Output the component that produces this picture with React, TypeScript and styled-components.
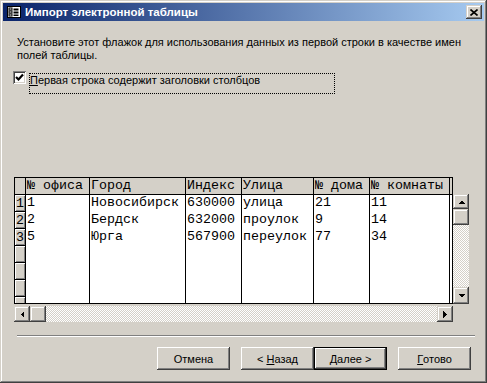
import React from "react";
import styled, { createGlobalStyle } from "styled-components";

const Global = createGlobalStyle`
  html, body { margin: 0; padding: 0; background: #d4d0c8; }
  * { box-sizing: border-box; }
`;

const FACE = "#d4d0c8";
const UI_FONT = `"Liberation Sans", Arial, sans-serif`;
const MONO = `"Liberation Mono", "Courier New", monospace`;

const bevelOut = `
  box-shadow: inset -1px -1px #404040, inset 1px 1px ${FACE},
    inset -2px -2px #808080, inset 2px 2px #ffffff;
`;

const Window = styled.div`
  width: 487px;
  height: 383px;
  padding: 3px;
  background: ${FACE};
  ${bevelOut}
  display: flex;
  flex-direction: column;
  font-family: ${UI_FONT};
  font-size: 11px;
  color: #000;
`;

const TitleBar = styled.div`
  height: 18px;
  display: flex;
  align-items: center;
  padding-left: 3px;
  padding-right: 2px;
  background: linear-gradient(to right, #0a246a, #a6caf0);
`;

const TitleIcon = styled.svg`
  width: 16px;
  height: 16px;
  flex: none;
`;

const TitleText = styled.span`
  margin-left: 3px;
  color: #fff;
  font-weight: bold;
  font-size: 11.5px;
  white-space: nowrap;
`;

const CloseBtn = styled.div`
  margin-left: auto;
  width: 16px;
  height: 14px;
  background: ${FACE};
  ${bevelOut}
  display: flex;
  align-items: center;
  justify-content: center;
`;

const Content = styled.div`
  flex: 1;
  display: flex;
  flex-direction: column;
  padding: 15px 13px 0 10px;
`;

const Instruction = styled.p`
  margin: 0 0 0 4px;
  line-height: 13px;
`;

const CheckRow = styled.div`
  margin-top: 9px;
  display: flex;
  align-items: flex-start;
  gap: 3px;
`;

const CheckBox = styled.div`
  width: 13px;
  height: 13px;
  flex: none;
  background: #fff;
  box-shadow: inset 1px 1px #808080, inset -1px -1px #ffffff,
    inset 2px 2px #404040, inset -2px -2px ${FACE};
  display: flex;
  align-items: center;
  justify-content: center;
`;

const CheckLabel = styled.div`
  margin-top: 2px;
  width: 306px;
  height: 21px;
  border: 1px dotted #000;
  line-height: 13px;
  padding-left: 0;
`;

const Underline = styled.span`
  text-decoration: underline;
  text-underline-offset: 1px;
`;

const GridArea = styled.div`
  margin-top: 83px;
  margin-left: 1px;
  display: grid;
  grid-template-columns: 439px 16px;
  grid-template-rows: 127px 16px;
  row-gap: 2px;
`;

const Sheet = styled.div`
  border: 1px solid #000;
  overflow: hidden;
  background: #fff;
  display: grid;
  grid-template-columns: 11px 64px 96px 56px 72px 56px 80px 2px;
  grid-auto-rows: 17px;
  align-content: start;
  font-family: ${MONO};
  font-size: 13.33px;
`;

const HeadCell = styled.div<{ $last?: boolean }>`
  background: ${FACE};
  border-bottom: 1px solid #000;
  border-right: ${(p) => (p.$last ? "none" : "1px solid #000")};
  line-height: 16px;
  padding-left: 1px;
  white-space: nowrap;
  overflow: hidden;
`;

const RowHead = styled.div`
  background: ${FACE};
  border-right: 1px solid #000;
  border-bottom: 1px solid #000;
  box-shadow: inset 1px 1px #fff, inset -1px -1px #808080;
  line-height: 17px;
  padding-left: 1px;
  overflow: hidden;
`;

const Cell = styled.div<{ $last?: boolean }>`
  background: #fff;
  border-right: ${(p) => (p.$last ? "none" : "1px solid #000")};
  line-height: 16px;
  padding-left: 1px;
  white-space: nowrap;
  overflow: hidden;
`;

const VScroll = styled.div`
  grid-column: 2;
  grid-row: 1;
  margin-top: 17px;
  height: 110px;
  display: flex;
  flex-direction: column;
  background-color: #fff;
  background-image: conic-gradient(${FACE} 25%, #fff 0 50%, ${FACE} 0 75%, #fff 0);
  background-size: 2px 2px;
`;

const HScroll = styled.div`
  grid-column: 1;
  grid-row: 2;
  display: flex;
  background-color: #fff;
  background-image: conic-gradient(${FACE} 25%, #fff 0 50%, ${FACE} 0 75%, #fff 0);
  background-size: 2px 2px;
`;

const ScrollBtn = styled.div<{ $h?: number; $end?: boolean }>`
  width: 16px;
  height: ${(p) => p.$h ?? 16}px;
  flex: none;
  background: ${FACE};
  ${bevelOut}
  display: flex;
  align-items: center;
  justify-content: center;
  ${(p) => (p.$end ? "margin-left: auto; margin-top: auto;" : "")}
`;

const Separator = styled.div`
  margin-top: 13px;
  margin-left: 4px;
  width: 458px;
  height: 2px;
  border-top: 1px solid #808080;
  border-bottom: 1px solid #fff;
`;

const ButtonRow = styled.div`
  margin-top: 10px;
  display: flex;
  justify-content: flex-end;
`;

const Button = styled.div<{ $default?: boolean; $gap?: number }>`
  width: 73px;
  height: 23px;
  margin-left: ${(p) => p.$gap ?? 0}px;
  background: ${FACE};
  display: flex;
  align-items: center;
  justify-content: center;
  ${(p) =>
    p.$default
      ? `box-shadow: inset 0 0 0 1px #000, inset -2px -2px #404040, inset 2px 2px #fff, inset -3px -3px #808080;`
      : `box-shadow: inset -1px -1px #404040, inset 1px 1px #fff, inset -2px -2px #808080;`}
`;

const Arrow = ({ dir }: { dir: "up" | "down" | "left" | "right" }) => {
  const pts = {
    up: "0,4 7,4 3.5,0.5",
    down: "0,0 7,0 3.5,3.5",
    left: "4,0 4,7 0.5,3.5",
    right: "0,0 0,7 3.5,3.5",
  }[dir];
  const vert = dir === "up" || dir === "down";
  return (
    <svg width={vert ? 7 : 4} height={vert ? 4 : 7} viewBox={vert ? "0 0 7 4" : "0 0 4 7"}>
      <polygon points={pts} fill="#000" shapeRendering="crispEdges" />
    </svg>
  );
};

const headers = ["№ офиса", "Город", "Индекс", "Улица", "№ дома", "№ комнаты"];
const rows: (string[] | null)[] = [
  ["1", "Новосибирск", "630000", "улица", "21", "11"],
  ["2", "Бердск", "632000", "проулок", "9", "14"],
  ["5", "Юрга", "567900", "переулок", "77", "34"],
  null,
  null,
  null,
  null,
];

export default function App() {
  return (
    <>
      <Global />
      <Window>
        <TitleBar>
          <TitleIcon viewBox="0 0 16 16">
            <rect x="1.5" y="2.5" width="13" height="11" fill="#fff" stroke="#000" />
            <rect x="3" y="4" width="3" height="2" fill="none" stroke="#000" strokeWidth="1" />
            <rect x="3" y="7" width="3" height="2" fill="none" stroke="#000" strokeWidth="1" />
            <rect x="3" y="10" width="3" height="2" fill="none" stroke="#000" strokeWidth="1" />
            <rect x="7.5" y="4.5" width="5" height="2" fill="#000" />
            <rect x="7.5" y="7.5" width="5" height="2" fill="#000" />
            <rect x="7.5" y="10.5" width="5" height="1.5" fill="#000" />
          </TitleIcon>
          <TitleText>Импорт электронной таблицы</TitleText>
          <CloseBtn>
            <svg width="8" height="7" viewBox="0 0 8 7">
              <path d="M0.5 0.5 L7.5 6.5 M7.5 0.5 L0.5 6.5" stroke="#000" strokeWidth="1.6" />
            </svg>
          </CloseBtn>
        </TitleBar>
        <Content>
          <Instruction>
            Установите этот флажок для использования данных из первой строки в качестве имен
            <br />
            полей таблицы.
          </Instruction>
          <CheckRow>
            <CheckBox>
              <svg width="9" height="9" viewBox="0 0 9 9">
                <path d="M1 4 L3.5 6.5 L8 1.5" fill="none" stroke="#000" strokeWidth="2.2" />
              </svg>
            </CheckBox>
            <CheckLabel>
              <Underline>П</Underline>ервая строка содержит заголовки столбцов
            </CheckLabel>
          </CheckRow>
          <GridArea>
            <Sheet>
              <HeadCell />
              {headers.map((h) => (
                <HeadCell key={h}>{h}</HeadCell>
              ))}
              <HeadCell $last />
              {rows.map((r, i) => (
                <React.Fragment key={i}>
                  <RowHead>{r ? String(i + 1) : ""}</RowHead>
                  {(r ?? ["", "", "", "", "", ""]).map((v, j) => (
                    <Cell key={j}>{v}</Cell>
                  ))}
                  <Cell $last />
                </React.Fragment>
              ))}
            </Sheet>
            <VScroll>
              <ScrollBtn $h={15}>
                <Arrow dir="up" />
              </ScrollBtn>
              <ScrollBtn $h={16} />
              <ScrollBtn $h={17} $end>
                <Arrow dir="down" />
              </ScrollBtn>
            </VScroll>
            <HScroll>
              <ScrollBtn>
                <Arrow dir="left" />
              </ScrollBtn>
              <ScrollBtn />
              <ScrollBtn $end>
                <Arrow dir="right" />
              </ScrollBtn>
            </HScroll>
          </GridArea>
          <Separator />
          <ButtonRow>
            <Button>Отмена</Button>
            <Button $gap={11}>
              &lt;&nbsp;<Underline>Н</Underline>азад
            </Button>
            <Button $default>
              <Underline>Д</Underline>алее&nbsp;&gt;
            </Button>
            <Button $gap={11}>
              <Underline>Г</Underline>отово
            </Button>
          </ButtonRow>
        </Content>
      </Window>
    </>
  );
}
